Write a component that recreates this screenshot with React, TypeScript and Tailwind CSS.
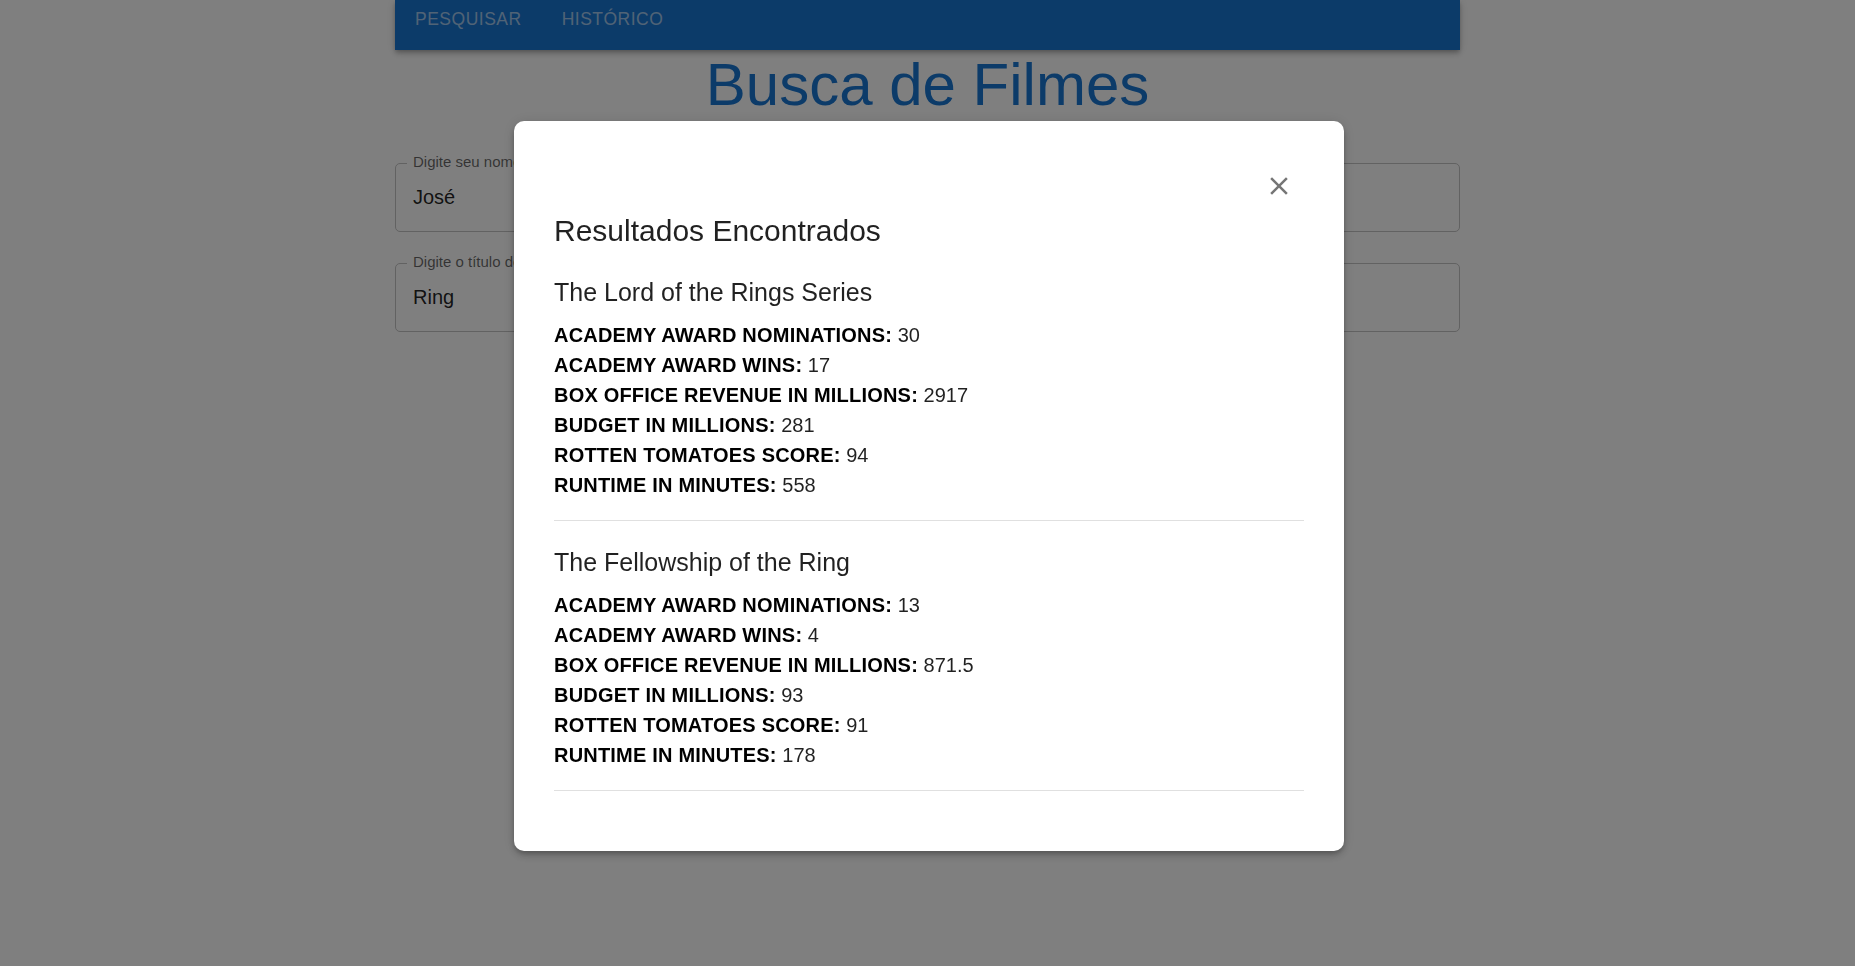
const filmes = [
  {
    name: "The Lord of the Rings Series",
    stats: [
      ["Academy Award Nominations", "30"],
      ["Academy Award Wins", "17"],
      ["Box Office Revenue in Millions", "2917"],
      ["Budget in Millions", "281"],
      ["Rotten Tomatoes Score", "94"],
      ["Runtime in Minutes", "558"],
    ],
  },
  {
    name: "The Fellowship of the Ring",
    stats: [
      ["Academy Award Nominations", "13"],
      ["Academy Award Wins", "4"],
      ["Box Office Revenue in Millions", "871.5"],
      ["Budget in Millions", "93"],
      ["Rotten Tomatoes Score", "91"],
      ["Runtime in Minutes", "178"],
    ],
  },
];

function Campo({ label, value, className }: { label: string; value: string; className: string }) {
  return (
    <div className={`relative h-[69px] rounded-[5px] border border-[#c4c4c4] flex items-center px-[17px] ${className}`}>
      <span className="absolute top-[-11px] left-[11px] px-[6px] bg-white text-[15px] leading-[18px] text-black/60">{label}</span>
      <span className="text-[20px] leading-[23px] text-black/[0.87]">{value}</span>
    </div>
  );
}

export default function App() {
  return (
    <div className="relative min-h-screen bg-white font-['Liberation_Sans',Arial,sans-serif]">
      <div className="mx-auto max-w-[1125px] px-[30px]">
        <nav className="h-[50px] bg-[#1976d2] flex items-start shadow-[0_2px_4px_-1px_rgba(0,0,0,0.2),0_4px_5px_0_rgba(0,0,0,0.14),0_1px_10px_0_rgba(0,0,0,0.12)]">
          {["Pesquisar", "Histórico"].map((t) => (
            <button key={t} className="px-[20px] pt-[7px] text-[17.5px] leading-[24px] uppercase tracking-[0.5px] text-white/60">
              {t}
            </button>
          ))}
        </nav>
        <h1 className="text-center text-[60px] leading-[70px] font-normal text-[#1976d2]">Busca de Filmes</h1>
        <Campo label="Digite seu nome" value="José" className="mt-[43px]" />
        <Campo label="Digite o título do filme" value="Ring" className="mt-[31px]" />
      </div>

      {/* backdrop */}
      <div className="fixed inset-0 bg-black/50" />

      <div className="fixed inset-0 flex justify-center items-start pt-[121px] pl-[3px]">
        <div className="w-[830px] bg-white rounded-[10px] px-[40px] pt-[40px] pb-[60px] text-black/[0.87] shadow-[0_3px_5px_-1px_rgba(0,0,0,0.2),0_5px_8px_0_rgba(0,0,0,0.14),0_1px_14px_0_rgba(0,0,0,0.12)]">
          <div className="flex justify-end">
            <button className="w-[50px] h-[50px] flex items-center justify-center rounded-full">
              <svg width="30" height="30" viewBox="0 0 24 24" fill="rgba(0,0,0,0.54)">
                <path d="M19 6.41 17.59 5 12 10.59 6.41 5 5 6.41 10.59 12 5 17.59 6.41 19 12 13.41 17.59 19 19 17.59 13.41 12z" />
              </svg>
            </button>
          </div>
          <h2 className="text-[30px] leading-[40px] font-normal">Resultados Encontrados</h2>
          <ul>
            {filmes.map((f) => (
              <li key={f.name} className="pt-[21px] pb-[20px] border-b border-[#e0e0e0]">
                <h3 className="text-[25px] leading-[40px] font-normal">{f.name}</h3>
                <div className="mt-[8px] text-[20px] leading-[30px]">
                  {f.stats.map(([k, v]) => (
                    <p key={k}>
                      <span className="font-bold uppercase tracking-[0.2px] text-black">{k}:</span> {v}
                    </p>
                  ))}
                </div>
              </li>
            ))}
          </ul>
        </div>
      </div>
    </div>
  );
}
